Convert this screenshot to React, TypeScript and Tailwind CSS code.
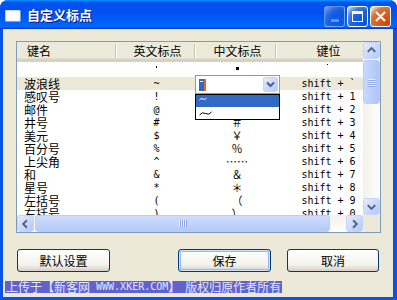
import React from "react";

const cjk = "font-['Noto_Sans_CJK_SC','Noto_Sans',sans-serif]";
const mono = "font-['DejaVu_Sans_Mono','Liberation_Mono',monospace]";

const rows: [string, string, string, string][] = [
  ["波浪线", "~", "～", "shift + `"],
  ["感叹号", "!", "！", "shift + 1"],
  ["邮件", "@", "＠", "shift + 2"],
  ["井号", "#", "＃", "shift + 3"],
  ["美元", "$", "￥", "shift + 4"],
  ["百分号", "%", "％", "shift + 5"],
  ["上尖角", "^", "……", "shift + 6"],
  ["和", "&", "＆", "shift + 7"],
  ["星号", "*", "＊", "shift + 8"],
  ["左括号", "(", "（", "shift + 9"],
  ["右括号", ")", "）", "shift + 0"],
];

function Arrow({ dir }: { dir: "up" | "down" | "left" | "right" }) {
  const d =
    dir === "up"
      ? "M4 9 L8 5 L12 9"
      : dir === "down"
      ? "M4 6 L8 10 L12 6"
      : dir === "left"
      ? "M9.5 4 L5.5 8 L9.5 12"
      : "M6.5 4 L10.5 8 L6.5 12";
  return (
    <svg width="16" height="16" viewBox="0 0 16 16">
      <path d={d} fill="none" stroke="#4d6185" strokeWidth="2" />
    </svg>
  );
}

function SBtn({ dir }: { dir: "up" | "down" | "left" | "right" }) {
  return (
    <div className="w-[17px] h-[17px] shrink-0 rounded-[3px] border border-[#c3d3fd] bg-[linear-gradient(135deg,#e6eefc,#c6d6fb_60%,#b6c9f5)] flex items-center justify-center">
      <Arrow dir={dir} />
    </div>
  );
}

function Separator() {
  return (
    <div className="flex h-[14px] shrink-0">
      <div className="w-px bg-[#c7c5b2]" />
      <div className="w-px bg-white" />
    </div>
  );
}

export default function App() {
  return (
    <div className="w-[397px] h-[300px] bg-white">
      <div className="w-[397px] h-[300px] flex flex-col rounded-t-[8px] overflow-hidden bg-[#0a53e4]">
        {/* Title bar */}
        <div className="h-[29px] shrink-0 flex items-center pl-[5px] pr-[6px] bg-[linear-gradient(180deg,#0997ff,#0053ee_8%,#0050ee_40%,#0066ff_88%,#0066ff_93%,#005bff_95%,#003dd7_96%,#003dd7)]">
          <svg width="16" height="16" viewBox="0 0 16 16" className="mt-[4px]">
            <rect x="0.5" y="1.5" width="15" height="11" fill="#dfe6f2" />
            <rect x="0.5" y="1.5" width="14" height="10" fill="#ffffff" />
            <rect x="0.5" y="1.5" width="14" height="2" fill="#f0f4fb" />
          </svg>
          <span
            className={`ml-[6px] text-[13px] font-bold text-white leading-none ${cjk} [text-shadow:1px_1px_0_#0a1883]`}
          >
            自定义标点
          </span>
          <div className="ml-auto flex gap-[2px] mt-[3px]">
            <div className="w-[21px] h-[21px] rounded-[3px] border border-white/60 bg-[radial-gradient(circle_at_90%_90%,#0054e9_0%,#2263d5_55%,#4479e4_70%,#a3bbec_90%,#ffffff_100%)] opacity-60 flex items-end justify-center pb-[4px]">
              <div className="w-[8px] h-[3px] bg-[#9fb7ee]" />
            </div>
            <div className="w-[21px] h-[21px] rounded-[3px] border border-white bg-[radial-gradient(circle_at_90%_90%,#0054e9_0%,#2263d5_55%,#4479e4_70%,#a3bbec_90%,#ffffff_100%)] flex items-center justify-center">
              <div className="w-[11px] h-[11px] border border-white border-t-[3px]" />
            </div>
            <div className="w-[21px] h-[21px] rounded-[3px] border border-white bg-[radial-gradient(circle_at_90%_90%,#cc4600_0%,#dc6527_55%,#cd7546_70%,#ffccb2_90%,#ffffff_100%)] flex items-center justify-center">
              <svg width="13" height="13" viewBox="0 0 13 13">
                <path d="M2 2 L11 11 M11 2 L2 11" stroke="white" strokeWidth="2.2" />
              </svg>
            </div>
          </div>
        </div>

        {/* Body */}
        <div className="flex-1 ml-[3px] mr-[4px] mb-[3px] bg-[#ece9d8] flex flex-col">
          {/* List box */}
          <div className="relative mt-[12px] ml-[13px] w-[365px] h-[192px] border border-[#7f9db9] bg-white flex flex-col">
            <div className="flex h-[173px]">
              <div className="w-[346px] overflow-hidden">
                <div className={`w-[363px] ${cjk} text-[12px] text-black`}>
                  {/* header */}
                  <div className="h-[20px] flex bg-[#ebeadb] border-b-[3px] border-[#d6d2c2] shadow-[inset_0_-1px_0_#e2decd]">
                    <div className="w-[100px] flex items-center justify-between pl-[10px]">
                      <span className="leading-none">键名</span>
                      <Separator />
                    </div>
                    <div className="w-[79px] flex items-center">
                      <span className="flex-1 text-center leading-none pl-[4px]">英文标点</span>
                      <Separator />
                    </div>
                    <div className="w-[81px] flex items-center">
                      <span className="flex-1 text-center leading-none pl-[4px]">中文标点</span>
                      <Separator />
                    </div>
                    <div className="w-[103px] flex items-center">
                      <span className="flex-1 text-center leading-none">键位</span>
                    </div>
                  </div>
                  {/* partially hidden row */}
                  <div className="h-[15px] flex">
                    <div className="w-[100px]" />
                    <div className="w-[79px] flex justify-center pt-[4px]">
                      <div className="w-[1px] h-[2px] bg-black" />
                    </div>
                    <div className="w-[81px] flex justify-center pt-[5px] pl-[2px]">
                      <div className="w-[3px] h-[3px] bg-black" />
                    </div>
                    <div className="w-[103px] flex justify-center pt-[2px]">
                      <div className="w-[1px] h-[1px] bg-black ml-[-2px]" />
                    </div>
                  </div>
                  {rows.map((r, i) => (
                    <div
                      key={i}
                      className={`h-[13px] flex items-center leading-[13px] ${
                        i === 0 ? "bg-[#ece9d8]" : ""
                      }`}
                    >
                      <div className="w-[100px] pl-[7px]">{r[0]}</div>
                      <div className={`w-[79px] text-center ${mono} text-[10px]`}>{r[1]}</div>
                      <div className="w-[81px] text-center pl-[1px] text-[11px]">{r[2]}</div>
                      <div className={`w-[103px] text-center ${mono} text-[10px]`}>{r[3]}</div>
                    </div>
                  ))}
                </div>
              </div>
              {/* vertical scrollbar */}
              <div className="w-[17px] flex flex-col bg-[linear-gradient(90deg,#f3f1ec,#fefefb)]">
                <SBtn dir="up" />
                <div className="mt-[1px] h-[44px] rounded-[3px] border border-[#b9cdf7] bg-[linear-gradient(90deg,#c9d8fc,#bccffb_50%,#b0c5f6)] flex flex-col items-center justify-center gap-[1px]">
                  {[0, 1, 2, 3].map((k) => (
                    <div key={k} className="w-[7px] h-[1px] bg-[#eef4fe] shadow-[0_1px_0_#8ca5e3]" />
                  ))}
                </div>
                <div className="flex-1" />
                <SBtn dir="down" />
              </div>
            </div>
            {/* horizontal scrollbar */}
            <div className="flex h-[17px]">
              <div className="w-[346px] flex bg-[linear-gradient(180deg,#f3f1ec,#fefefb)]">
                <SBtn dir="left" />
                <div className="ml-[1px] w-[295px] rounded-[3px] border border-[#b9cdf7] bg-[linear-gradient(180deg,#cfdcfc,#c2d4fb_50%,#b4c8f7)] flex items-center justify-center gap-[1px]">
                  {[0, 1, 2, 3].map((k) => (
                    <div key={k} className="w-[1px] h-[7px] bg-[#eef4fe] shadow-[1px_0_0_#8ca5e3]" />
                  ))}
                </div>
                <div className="flex-1" />
                <SBtn dir="right" />
              </div>
              <div className="w-[17px] bg-[#ece9d8]" />
            </div>

            {/* combo box */}
            <div className="absolute left-[178px] top-[33px] w-[85px] h-[19px] border border-[#7f9db9] bg-white flex items-center pl-[3px] pr-[1px]">
              <div className="w-[5px] h-[12px] bg-[#316ac5] relative">
                <div className="absolute left-[1px] top-[2px] w-[3px] h-[1px] bg-white" />
              </div>
              <div className="w-[2px] h-[12px] bg-[#e8652a]" />
              <div className="ml-auto w-[15px] h-[15px] rounded-[2px] border border-[#c3d3fd] bg-[linear-gradient(135deg,#e6eefc,#c6d6fb_60%,#b6c9f5)] flex items-center justify-center">
                <svg width="11" height="11" viewBox="0 0 11 11">
                  <path d="M2 3.5 L5.5 7 L9 3.5" fill="none" stroke="#4d6185" strokeWidth="2" />
                </svg>
              </div>
            </div>
            {/* dropdown list */}
            <div className="absolute left-[178px] top-[52px] w-[85px] h-[26px] border border-black bg-white flex flex-col">
              <div className="h-[12px] bg-[#316ac5] relative">
                <svg width="8" height="4" viewBox="0 0 8 4" className="absolute left-[3px] top-[2px]">
                  <path d="M0.5 3 Q2 0.5 4 2 Q6 3.5 7.5 1" fill="none" stroke="white" strokeWidth="1" />
                </svg>
              </div>
              <div className="h-[12px] relative">
                <svg width="13" height="5" viewBox="0 0 13 5" className="absolute left-[3px] top-[4px]">
                  <path d="M0.5 4 Q3 0.5 6.5 2.5 Q10 4.5 12.5 1" fill="none" stroke="black" strokeWidth="1" />
                </svg>
              </div>
            </div>
          </div>

          {/* buttons */}
          <div className={`mt-[16px] flex ${cjk} text-[12px] text-black`}>
            <div className="ml-[14px] w-[93px] h-[23px] rounded-[3px] border border-[#003c74] bg-[linear-gradient(180deg,#ffffff,#f3f2ec_70%,#d6d0c5)] flex items-center justify-center leading-none">
              默认设置
            </div>
            <div className="ml-[68px] w-[93px] h-[23px] rounded-[3px] border border-[#003c74] bg-[linear-gradient(180deg,#ffffff,#f3f2ec_70%,#d6d0c5)] shadow-[inset_0_0_0_1px_#cee7ff,inset_0_0_0_2px_#98b8ea] flex items-center justify-center leading-none">
              保存
            </div>
            <div className="ml-[16px] w-[92px] h-[23px] rounded-[3px] border border-[#003c74] bg-[linear-gradient(180deg,#ffffff,#f3f2ec_70%,#d6d0c5)] flex items-center justify-center leading-none">
              取消
            </div>
          </div>

          {/* footer */}
          <div
            className={`mt-[9px] ml-[2px] self-start h-[12px] bg-[#6262cc] text-[#e6e6ff] text-[12px] leading-[12px] whitespace-nowrap pl-[1px] pr-[1px] flex items-center ${cjk}`}
          >
            <span>上传于【新客网</span>
            <span className={`${mono} text-[10px] whitespace-pre`}> WWW.XKER.COM</span>
            <span>】</span>
            <span className="ml-[5px]">版权归原作者所有</span>
          </div>
        </div>
      </div>
    </div>
  );
}
